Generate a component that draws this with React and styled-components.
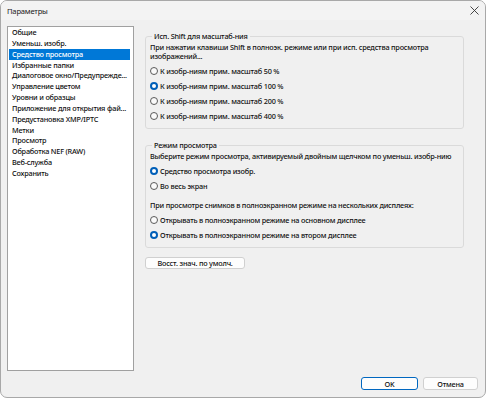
import React from 'react'
import styled, { createGlobalStyle } from 'styled-components'

const GlobalStyle = createGlobalStyle`
  html, body {
    margin: 0;
    padding: 0;
    background: #ffffff;
  }
  body {
    font-family: "Noto Sans", "Open Sans", sans-serif;
    font-size: 7.3px;
    font-weight: 500;
    letter-spacing: -0.2px;
    color: #111111;
  }
`

const pages = [
  'Общие',
  'Уменьш. изобр.',
  'Средство просмотра',
  'Избранные папки',
  'Диалоговое окно/Предупрежде...',
  'Управление цветом',
  'Уровни и образцы',
  'Приложение для открытия фай...',
  'Предустановка XMP/IPTC',
  'Метки',
  'Просмотр',
  'Обработка NEF (RAW)',
  'Веб-служба',
  'Сохранить',
]

const zoomOptions = [
  { label: 'К изобр-ниям прим. масштаб 50 %', checked: false },
  { label: 'К изобр-ниям прим. масштаб 100 %', checked: true },
  { label: 'К изобр-ниям прим. масштаб 200 %', checked: false },
  { label: 'К изобр-ниям прим. масштаб 400 %', checked: false },
]

const Radio = ({ checked, children }) => (
  <RadioRow>
    <RadioDot $checked={checked} />
    <span>{children}</span>
  </RadioRow>
)

const App = () => {
  return (
    <>
      <GlobalStyle />
      <Window>
        <TitleBar>
          <span>Параметры</span>
          <svg width="9" height="9" viewBox="0 0 9 9">
            <path d="M0.5 0.5 L8.5 8.5 M8.5 0.5 L0.5 8.5" stroke="#333" strokeWidth="0.9" fill="none" />
          </svg>
        </TitleBar>
        <Body>
          <Main>
            <ListBox>
              {pages.map((p, i) => (
                <ListItem key={p} $active={i === 2}>{p}</ListItem>
              ))}
            </ListBox>
            <Panel>
              <Group>
                <Legend>Исп. Shift для масштаб-ния</Legend>
                <Note>При нажатии клавиши Shift в полноэк. режиме или при исп. средства просмотра изображений...</Note>
                {zoomOptions.map(o => (
                  <Radio key={o.label} checked={o.checked}>{o.label}</Radio>
                ))}
              </Group>
              <Group>
                <Legend>Режим просмотра</Legend>
                <Note>Выберите режим просмотра, активируемый двойным щелчком по уменьш. изобр-нию</Note>
                <Radio checked>Средство просмотра изобр.</Radio>
                <Radio>Во весь экран</Radio>
                <Note $gap>При просмотре снимков в полноэкранном режиме на нескольких дисплеях:</Note>
                <Radio>Открывать в полноэкранном режиме на основном дисплее</Radio>
                <Radio checked>Открывать в полноэкранном режиме на втором дисплее</Radio>
              </Group>
              <Button $width={100} $height={12}>Восст. знач. по умолч.</Button>
            </Panel>
          </Main>
          <Footer>
            <Button $width={57} $height={13} $primary>OK</Button>
            <Button $width={55} $height={13}>Отмена</Button>
          </Footer>
        </Body>
      </Window>
    </>
  )
}

export default App

const Window = styled.div`
  width: 486px;
  height: 398px;
  box-sizing: border-box;
  border: 1px solid #a8a8a8;
  border-radius: 7px;
  background: #f0f0f0;
  display: flex;
  flex-direction: column;
  overflow: hidden;
`

const TitleBar = styled.div`
  height: 19px;
  flex: none;
  display: flex;
  align-items: center;
  justify-content: space-between;
  padding: 0 6px 0 6px;
  background: #f3f3f3;
  color: #202020;
  font-size: 7.6px;
  font-weight: 400;
`

const Body = styled.div`
  flex: 1;
  display: flex;
  flex-direction: column;
  padding: 6px 6px 7px 6px;
`

const Main = styled.div`
  flex: 1;
  display: flex;
`

const ListBox = styled.div`
  width: 127px;
  height: 345px;
  box-sizing: border-box;
  border: 1px solid #a0a0a0;
  background: #ffffff;
  padding: 0 3px 0 1px;
`

const ListItem = styled.div`
  height: 10.85px;
  line-height: 10.85px;
  padding-left: 3px;
  white-space: nowrap;
  overflow: hidden;
  background: ${p => (p.$active ? '#0078d7' : 'transparent')};
  color: ${p => (p.$active ? '#ffffff' : 'inherit')};
`

const Panel = styled.div`
  flex: 1;
  display: flex;
  flex-direction: column;
  align-items: flex-start;
  padding: 5px 15px 0 11px;
`

const Group = styled.fieldset`
  align-self: stretch;
  margin: 0 0 11px 0;
  padding: 2px 4px 5px 4px;
  border: 1px solid #dadada;
  border-radius: 3px;

  &:last-of-type {
    margin-bottom: 9px;
  }
`

const Legend = styled.legend`
  padding: 0 2px;
  margin-left: 2px;
  line-height: 10px;
`

const Note = styled.div`
  line-height: 9px;
  margin: ${p => (p.$gap ? '8px 0 2px' : '0 0 2px')};
`

const RadioRow = styled.div`
  height: 15px;
  display: flex;
  align-items: center;
  gap: 2px;
`

const RadioDot = styled.span`
  width: 8px;
  height: 8px;
  box-sizing: border-box;
  border-radius: 50%;
  flex: none;
  background: ${p => (p.$checked ? '#ffffff' : '#fafafa')};
  border: ${p => (p.$checked ? '2.5px solid #005fb8' : '1px solid #5a5a5a')};
`

const Button = styled.button`
  width: ${p => p.$width}px;
  height: ${p => p.$height}px;
  padding: 0;
  font-family: inherit;
  font-size: 7.3px;
  font-weight: 500;
  letter-spacing: -0.2px;
  line-height: 10px;
  color: #111111;
  background: #fdfdfd;
  border: 1px solid ${p => (p.$primary ? '#0067c0' : '#d0d0d0')};
  border-radius: 3px;
`

const Footer = styled.div`
  flex: none;
  display: flex;
  justify-content: flex-end;
  gap: 5px;
  padding-right: 1px;
  margin-top: 6px;
  height: 13px;
  align-items: center;
`
